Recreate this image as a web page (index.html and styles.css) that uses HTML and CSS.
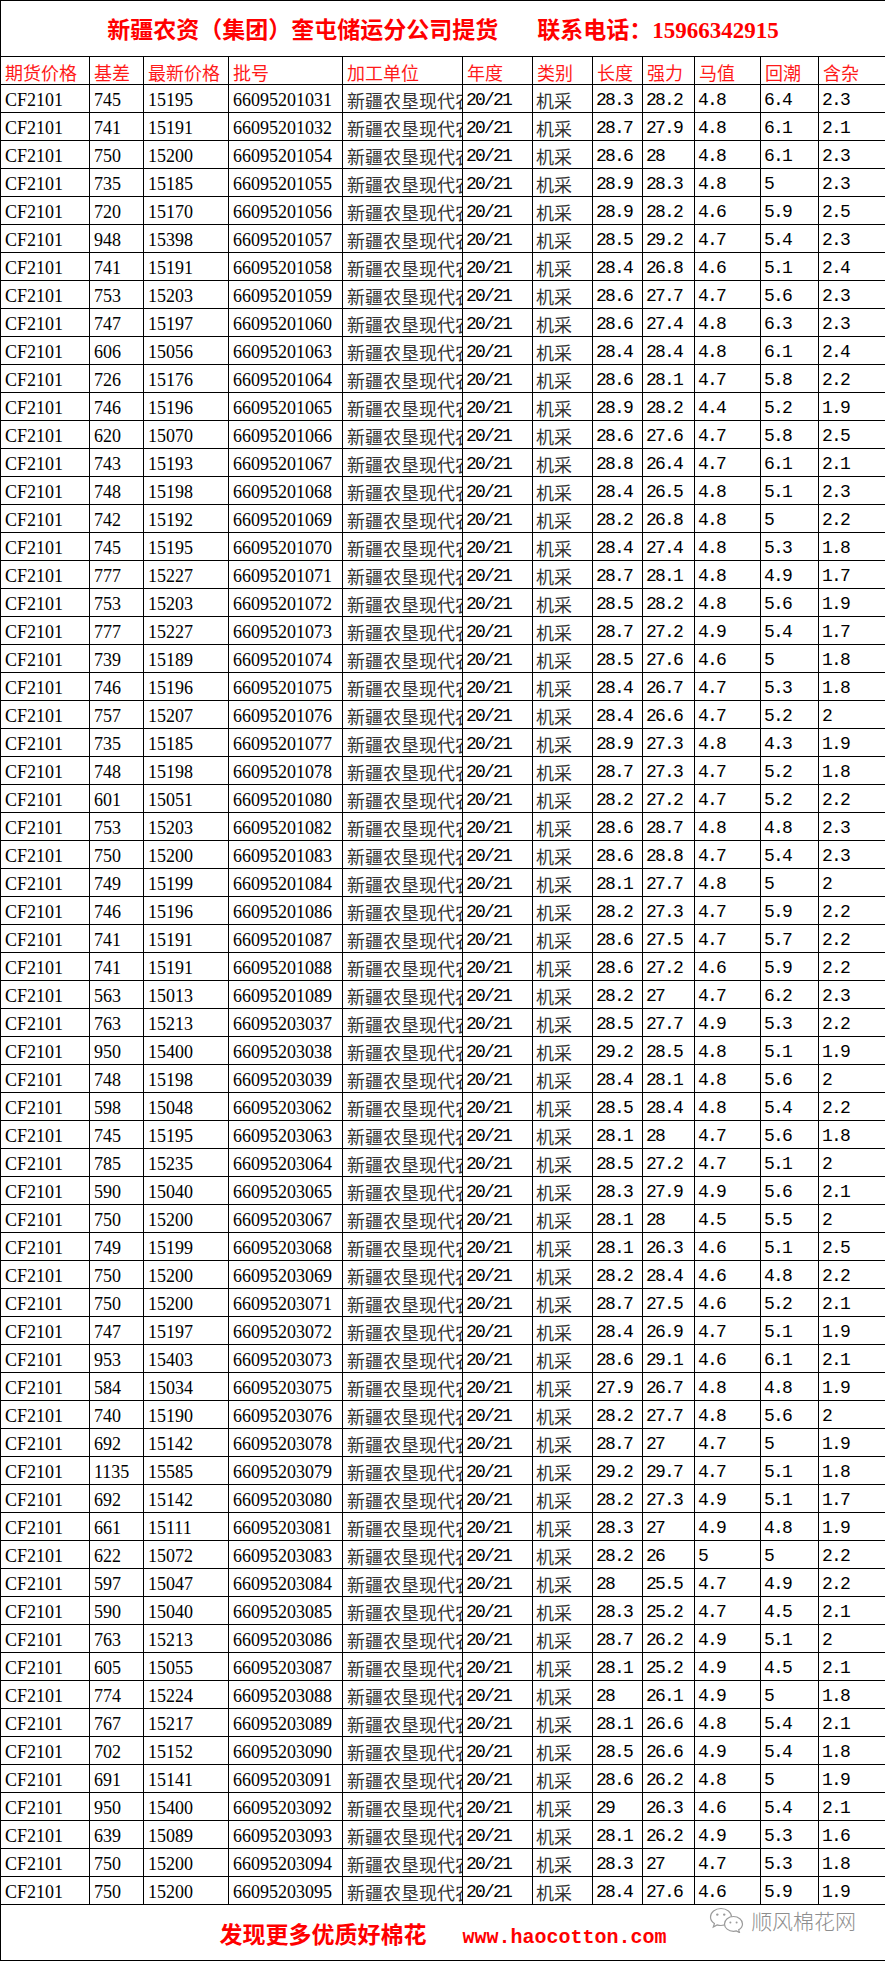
FILE: index.html
```html
<!DOCTYPE html>
<html lang="zh-CN">
<head>
<meta charset="utf-8">
<title>奎屯储运分公司提货</title>
<link rel="stylesheet" href="styles.css">
</head>
<body>
<div class="sheet">
<table class="grid">
<colgroup>
<col class="w-a"><col class="w-b"><col class="w-c"><col class="w-d"><col class="w-e"><col class="w-f"><col class="w-g"><col class="w-h"><col class="w-i"><col class="w-j"><col class="w-k"><col class="w-l">
</colgroup>
<thead>
<tr class="title"><th colspan="12"><span>新疆农资（集团）奎屯储运分公司提货</span><span class="tel">联系电话：<span class="num">15966342915</span></span></th></tr>
<tr class="head"><th>期货价格</th><th>基差</th><th>最新价格</th><th>批号</th><th>加工单位</th><th>年度</th><th>类别</th><th>长度</th><th>强力</th><th>马值</th><th>回潮</th><th>含杂</th></tr>
</thead>
<tbody>
<tr><td>CF2101</td><td>745</td><td>15195</td><td>66095201031</td><td>新疆农垦现代农业有限公司</td><td>20/21</td><td>机采</td><td>28.3</td><td>28.2</td><td>4.8</td><td>6.4</td><td>2.3</td></tr>
<tr><td>CF2101</td><td>741</td><td>15191</td><td>66095201032</td><td>新疆农垦现代农业有限公司</td><td>20/21</td><td>机采</td><td>28.7</td><td>27.9</td><td>4.8</td><td>6.1</td><td>2.1</td></tr>
<tr><td>CF2101</td><td>750</td><td>15200</td><td>66095201054</td><td>新疆农垦现代农业有限公司</td><td>20/21</td><td>机采</td><td>28.6</td><td>28</td><td>4.8</td><td>6.1</td><td>2.3</td></tr>
<tr><td>CF2101</td><td>735</td><td>15185</td><td>66095201055</td><td>新疆农垦现代农业有限公司</td><td>20/21</td><td>机采</td><td>28.9</td><td>28.3</td><td>4.8</td><td>5</td><td>2.3</td></tr>
<tr><td>CF2101</td><td>720</td><td>15170</td><td>66095201056</td><td>新疆农垦现代农业有限公司</td><td>20/21</td><td>机采</td><td>28.9</td><td>28.2</td><td>4.6</td><td>5.9</td><td>2.5</td></tr>
<tr><td>CF2101</td><td>948</td><td>15398</td><td>66095201057</td><td>新疆农垦现代农业有限公司</td><td>20/21</td><td>机采</td><td>28.5</td><td>29.2</td><td>4.7</td><td>5.4</td><td>2.3</td></tr>
<tr><td>CF2101</td><td>741</td><td>15191</td><td>66095201058</td><td>新疆农垦现代农业有限公司</td><td>20/21</td><td>机采</td><td>28.4</td><td>26.8</td><td>4.6</td><td>5.1</td><td>2.4</td></tr>
<tr><td>CF2101</td><td>753</td><td>15203</td><td>66095201059</td><td>新疆农垦现代农业有限公司</td><td>20/21</td><td>机采</td><td>28.6</td><td>27.7</td><td>4.7</td><td>5.6</td><td>2.3</td></tr>
<tr><td>CF2101</td><td>747</td><td>15197</td><td>66095201060</td><td>新疆农垦现代农业有限公司</td><td>20/21</td><td>机采</td><td>28.6</td><td>27.4</td><td>4.8</td><td>6.3</td><td>2.3</td></tr>
<tr><td>CF2101</td><td>606</td><td>15056</td><td>66095201063</td><td>新疆农垦现代农业有限公司</td><td>20/21</td><td>机采</td><td>28.4</td><td>28.4</td><td>4.8</td><td>6.1</td><td>2.4</td></tr>
<tr><td>CF2101</td><td>726</td><td>15176</td><td>66095201064</td><td>新疆农垦现代农业有限公司</td><td>20/21</td><td>机采</td><td>28.6</td><td>28.1</td><td>4.7</td><td>5.8</td><td>2.2</td></tr>
<tr><td>CF2101</td><td>746</td><td>15196</td><td>66095201065</td><td>新疆农垦现代农业有限公司</td><td>20/21</td><td>机采</td><td>28.9</td><td>28.2</td><td>4.4</td><td>5.2</td><td>1.9</td></tr>
<tr><td>CF2101</td><td>620</td><td>15070</td><td>66095201066</td><td>新疆农垦现代农业有限公司</td><td>20/21</td><td>机采</td><td>28.6</td><td>27.6</td><td>4.7</td><td>5.8</td><td>2.5</td></tr>
<tr><td>CF2101</td><td>743</td><td>15193</td><td>66095201067</td><td>新疆农垦现代农业有限公司</td><td>20/21</td><td>机采</td><td>28.8</td><td>26.4</td><td>4.7</td><td>6.1</td><td>2.1</td></tr>
<tr><td>CF2101</td><td>748</td><td>15198</td><td>66095201068</td><td>新疆农垦现代农业有限公司</td><td>20/21</td><td>机采</td><td>28.4</td><td>26.5</td><td>4.8</td><td>5.1</td><td>2.3</td></tr>
<tr><td>CF2101</td><td>742</td><td>15192</td><td>66095201069</td><td>新疆农垦现代农业有限公司</td><td>20/21</td><td>机采</td><td>28.2</td><td>26.8</td><td>4.8</td><td>5</td><td>2.2</td></tr>
<tr><td>CF2101</td><td>745</td><td>15195</td><td>66095201070</td><td>新疆农垦现代农业有限公司</td><td>20/21</td><td>机采</td><td>28.4</td><td>27.4</td><td>4.8</td><td>5.3</td><td>1.8</td></tr>
<tr><td>CF2101</td><td>777</td><td>15227</td><td>66095201071</td><td>新疆农垦现代农业有限公司</td><td>20/21</td><td>机采</td><td>28.7</td><td>28.1</td><td>4.8</td><td>4.9</td><td>1.7</td></tr>
<tr><td>CF2101</td><td>753</td><td>15203</td><td>66095201072</td><td>新疆农垦现代农业有限公司</td><td>20/21</td><td>机采</td><td>28.5</td><td>28.2</td><td>4.8</td><td>5.6</td><td>1.9</td></tr>
<tr><td>CF2101</td><td>777</td><td>15227</td><td>66095201073</td><td>新疆农垦现代农业有限公司</td><td>20/21</td><td>机采</td><td>28.7</td><td>27.2</td><td>4.9</td><td>5.4</td><td>1.7</td></tr>
<tr><td>CF2101</td><td>739</td><td>15189</td><td>66095201074</td><td>新疆农垦现代农业有限公司</td><td>20/21</td><td>机采</td><td>28.5</td><td>27.6</td><td>4.6</td><td>5</td><td>1.8</td></tr>
<tr><td>CF2101</td><td>746</td><td>15196</td><td>66095201075</td><td>新疆农垦现代农业有限公司</td><td>20/21</td><td>机采</td><td>28.4</td><td>26.7</td><td>4.7</td><td>5.3</td><td>1.8</td></tr>
<tr><td>CF2101</td><td>757</td><td>15207</td><td>66095201076</td><td>新疆农垦现代农业有限公司</td><td>20/21</td><td>机采</td><td>28.4</td><td>26.6</td><td>4.7</td><td>5.2</td><td>2</td></tr>
<tr><td>CF2101</td><td>735</td><td>15185</td><td>66095201077</td><td>新疆农垦现代农业有限公司</td><td>20/21</td><td>机采</td><td>28.9</td><td>27.3</td><td>4.8</td><td>4.3</td><td>1.9</td></tr>
<tr><td>CF2101</td><td>748</td><td>15198</td><td>66095201078</td><td>新疆农垦现代农业有限公司</td><td>20/21</td><td>机采</td><td>28.7</td><td>27.3</td><td>4.7</td><td>5.2</td><td>1.8</td></tr>
<tr><td>CF2101</td><td>601</td><td>15051</td><td>66095201080</td><td>新疆农垦现代农业有限公司</td><td>20/21</td><td>机采</td><td>28.2</td><td>27.2</td><td>4.7</td><td>5.2</td><td>2.2</td></tr>
<tr><td>CF2101</td><td>753</td><td>15203</td><td>66095201082</td><td>新疆农垦现代农业有限公司</td><td>20/21</td><td>机采</td><td>28.6</td><td>28.7</td><td>4.8</td><td>4.8</td><td>2.3</td></tr>
<tr><td>CF2101</td><td>750</td><td>15200</td><td>66095201083</td><td>新疆农垦现代农业有限公司</td><td>20/21</td><td>机采</td><td>28.6</td><td>28.8</td><td>4.7</td><td>5.4</td><td>2.3</td></tr>
<tr><td>CF2101</td><td>749</td><td>15199</td><td>66095201084</td><td>新疆农垦现代农业有限公司</td><td>20/21</td><td>机采</td><td>28.1</td><td>27.7</td><td>4.8</td><td>5</td><td>2</td></tr>
<tr><td>CF2101</td><td>746</td><td>15196</td><td>66095201086</td><td>新疆农垦现代农业有限公司</td><td>20/21</td><td>机采</td><td>28.2</td><td>27.3</td><td>4.7</td><td>5.9</td><td>2.2</td></tr>
<tr><td>CF2101</td><td>741</td><td>15191</td><td>66095201087</td><td>新疆农垦现代农业有限公司</td><td>20/21</td><td>机采</td><td>28.6</td><td>27.5</td><td>4.7</td><td>5.7</td><td>2.2</td></tr>
<tr><td>CF2101</td><td>741</td><td>15191</td><td>66095201088</td><td>新疆农垦现代农业有限公司</td><td>20/21</td><td>机采</td><td>28.6</td><td>27.2</td><td>4.6</td><td>5.9</td><td>2.2</td></tr>
<tr><td>CF2101</td><td>563</td><td>15013</td><td>66095201089</td><td>新疆农垦现代农业有限公司</td><td>20/21</td><td>机采</td><td>28.2</td><td>27</td><td>4.7</td><td>6.2</td><td>2.3</td></tr>
<tr><td>CF2101</td><td>763</td><td>15213</td><td>66095203037</td><td>新疆农垦现代农业有限公司</td><td>20/21</td><td>机采</td><td>28.5</td><td>27.7</td><td>4.9</td><td>5.3</td><td>2.2</td></tr>
<tr><td>CF2101</td><td>950</td><td>15400</td><td>66095203038</td><td>新疆农垦现代农业有限公司</td><td>20/21</td><td>机采</td><td>29.2</td><td>28.5</td><td>4.8</td><td>5.1</td><td>1.9</td></tr>
<tr><td>CF2101</td><td>748</td><td>15198</td><td>66095203039</td><td>新疆农垦现代农业有限公司</td><td>20/21</td><td>机采</td><td>28.4</td><td>28.1</td><td>4.8</td><td>5.6</td><td>2</td></tr>
<tr><td>CF2101</td><td>598</td><td>15048</td><td>66095203062</td><td>新疆农垦现代农业有限公司</td><td>20/21</td><td>机采</td><td>28.5</td><td>28.4</td><td>4.8</td><td>5.4</td><td>2.2</td></tr>
<tr><td>CF2101</td><td>745</td><td>15195</td><td>66095203063</td><td>新疆农垦现代农业有限公司</td><td>20/21</td><td>机采</td><td>28.1</td><td>28</td><td>4.7</td><td>5.6</td><td>1.8</td></tr>
<tr><td>CF2101</td><td>785</td><td>15235</td><td>66095203064</td><td>新疆农垦现代农业有限公司</td><td>20/21</td><td>机采</td><td>28.5</td><td>27.2</td><td>4.7</td><td>5.1</td><td>2</td></tr>
<tr><td>CF2101</td><td>590</td><td>15040</td><td>66095203065</td><td>新疆农垦现代农业有限公司</td><td>20/21</td><td>机采</td><td>28.3</td><td>27.9</td><td>4.9</td><td>5.6</td><td>2.1</td></tr>
<tr><td>CF2101</td><td>750</td><td>15200</td><td>66095203067</td><td>新疆农垦现代农业有限公司</td><td>20/21</td><td>机采</td><td>28.1</td><td>28</td><td>4.5</td><td>5.5</td><td>2</td></tr>
<tr><td>CF2101</td><td>749</td><td>15199</td><td>66095203068</td><td>新疆农垦现代农业有限公司</td><td>20/21</td><td>机采</td><td>28.1</td><td>26.3</td><td>4.6</td><td>5.1</td><td>2.5</td></tr>
<tr><td>CF2101</td><td>750</td><td>15200</td><td>66095203069</td><td>新疆农垦现代农业有限公司</td><td>20/21</td><td>机采</td><td>28.2</td><td>28.4</td><td>4.6</td><td>4.8</td><td>2.2</td></tr>
<tr><td>CF2101</td><td>750</td><td>15200</td><td>66095203071</td><td>新疆农垦现代农业有限公司</td><td>20/21</td><td>机采</td><td>28.7</td><td>27.5</td><td>4.6</td><td>5.2</td><td>2.1</td></tr>
<tr><td>CF2101</td><td>747</td><td>15197</td><td>66095203072</td><td>新疆农垦现代农业有限公司</td><td>20/21</td><td>机采</td><td>28.4</td><td>26.9</td><td>4.7</td><td>5.1</td><td>1.9</td></tr>
<tr><td>CF2101</td><td>953</td><td>15403</td><td>66095203073</td><td>新疆农垦现代农业有限公司</td><td>20/21</td><td>机采</td><td>28.6</td><td>29.1</td><td>4.6</td><td>6.1</td><td>2.1</td></tr>
<tr><td>CF2101</td><td>584</td><td>15034</td><td>66095203075</td><td>新疆农垦现代农业有限公司</td><td>20/21</td><td>机采</td><td>27.9</td><td>26.7</td><td>4.8</td><td>4.8</td><td>1.9</td></tr>
<tr><td>CF2101</td><td>740</td><td>15190</td><td>66095203076</td><td>新疆农垦现代农业有限公司</td><td>20/21</td><td>机采</td><td>28.2</td><td>27.7</td><td>4.8</td><td>5.6</td><td>2</td></tr>
<tr><td>CF2101</td><td>692</td><td>15142</td><td>66095203078</td><td>新疆农垦现代农业有限公司</td><td>20/21</td><td>机采</td><td>28.7</td><td>27</td><td>4.7</td><td>5</td><td>1.9</td></tr>
<tr><td>CF2101</td><td>1135</td><td>15585</td><td>66095203079</td><td>新疆农垦现代农业有限公司</td><td>20/21</td><td>机采</td><td>29.2</td><td>29.7</td><td>4.7</td><td>5.1</td><td>1.8</td></tr>
<tr><td>CF2101</td><td>692</td><td>15142</td><td>66095203080</td><td>新疆农垦现代农业有限公司</td><td>20/21</td><td>机采</td><td>28.2</td><td>27.3</td><td>4.9</td><td>5.1</td><td>1.7</td></tr>
<tr><td>CF2101</td><td>661</td><td>15111</td><td>66095203081</td><td>新疆农垦现代农业有限公司</td><td>20/21</td><td>机采</td><td>28.3</td><td>27</td><td>4.9</td><td>4.8</td><td>1.9</td></tr>
<tr><td>CF2101</td><td>622</td><td>15072</td><td>66095203083</td><td>新疆农垦现代农业有限公司</td><td>20/21</td><td>机采</td><td>28.2</td><td>26</td><td>5</td><td>5</td><td>2.2</td></tr>
<tr><td>CF2101</td><td>597</td><td>15047</td><td>66095203084</td><td>新疆农垦现代农业有限公司</td><td>20/21</td><td>机采</td><td>28</td><td>25.5</td><td>4.7</td><td>4.9</td><td>2.2</td></tr>
<tr><td>CF2101</td><td>590</td><td>15040</td><td>66095203085</td><td>新疆农垦现代农业有限公司</td><td>20/21</td><td>机采</td><td>28.3</td><td>25.2</td><td>4.7</td><td>4.5</td><td>2.1</td></tr>
<tr><td>CF2101</td><td>763</td><td>15213</td><td>66095203086</td><td>新疆农垦现代农业有限公司</td><td>20/21</td><td>机采</td><td>28.7</td><td>26.2</td><td>4.9</td><td>5.1</td><td>2</td></tr>
<tr><td>CF2101</td><td>605</td><td>15055</td><td>66095203087</td><td>新疆农垦现代农业有限公司</td><td>20/21</td><td>机采</td><td>28.1</td><td>25.2</td><td>4.9</td><td>4.5</td><td>2.1</td></tr>
<tr><td>CF2101</td><td>774</td><td>15224</td><td>66095203088</td><td>新疆农垦现代农业有限公司</td><td>20/21</td><td>机采</td><td>28</td><td>26.1</td><td>4.9</td><td>5</td><td>1.8</td></tr>
<tr><td>CF2101</td><td>767</td><td>15217</td><td>66095203089</td><td>新疆农垦现代农业有限公司</td><td>20/21</td><td>机采</td><td>28.1</td><td>26.6</td><td>4.8</td><td>5.4</td><td>2.1</td></tr>
<tr><td>CF2101</td><td>702</td><td>15152</td><td>66095203090</td><td>新疆农垦现代农业有限公司</td><td>20/21</td><td>机采</td><td>28.5</td><td>26.6</td><td>4.9</td><td>5.4</td><td>1.8</td></tr>
<tr><td>CF2101</td><td>691</td><td>15141</td><td>66095203091</td><td>新疆农垦现代农业有限公司</td><td>20/21</td><td>机采</td><td>28.6</td><td>26.2</td><td>4.8</td><td>5</td><td>1.9</td></tr>
<tr><td>CF2101</td><td>950</td><td>15400</td><td>66095203092</td><td>新疆农垦现代农业有限公司</td><td>20/21</td><td>机采</td><td>29</td><td>26.3</td><td>4.6</td><td>5.4</td><td>2.1</td></tr>
<tr><td>CF2101</td><td>639</td><td>15089</td><td>66095203093</td><td>新疆农垦现代农业有限公司</td><td>20/21</td><td>机采</td><td>28.1</td><td>26.2</td><td>4.9</td><td>5.3</td><td>1.6</td></tr>
<tr><td>CF2101</td><td>750</td><td>15200</td><td>66095203094</td><td>新疆农垦现代农业有限公司</td><td>20/21</td><td>机采</td><td>28.3</td><td>27</td><td>4.7</td><td>5.3</td><td>1.8</td></tr>
<tr><td>CF2101</td><td>750</td><td>15200</td><td>66095203095</td><td>新疆农垦现代农业有限公司</td><td>20/21</td><td>机采</td><td>28.4</td><td>27.6</td><td>4.6</td><td>5.9</td><td>1.9</td></tr>
</tbody>
<tfoot>
<tr class="foot"><td colspan="12"><span class="slogan">发现更多优质好棉花</span><span class="url">www.haocotton.com</span><div class="wm"><svg class="wechat" viewBox="0 0 36 26" width="36" height="26" aria-hidden="true"><path d="M13 1.5C7.2 1.5 2.5 5.3 2.5 10c0 2.7 1.5 5 3.9 6.6L5.3 20l3.8-2.1c1.2.4 2.5.6 3.9.6 5.8 0 10.5-3.8 10.5-8.5S18.8 1.5 13 1.5z" fill="#fff" stroke="#9b9b9b" stroke-width="1.2"/><circle cx="9.3" cy="7.6" r="1.2" fill="#9b9b9b"/><circle cx="16.2" cy="7.6" r="1.2" fill="#9b9b9b"/><path d="M25.5 9.5c-5 0-9 3.3-9 7.4s4 7.4 9 7.4c1 0 2-.1 2.9-.4l3.1 1.7-.8-2.8c2.3-1.4 3.8-3.5 3.8-5.9 0-4.1-4-7.4-9-7.4z" fill="#fff" stroke="#9b9b9b" stroke-width="1.2"/><circle cx="22.4" cy="15.6" r="1" fill="#9b9b9b"/><circle cx="28.6" cy="15.6" r="1" fill="#9b9b9b"/></svg><span class="wm-text">顺风棉花网</span></div></td></tr>
</tfoot>
</table>
</div>
</body>
</html>
```
FILE: styles.css
```css
html, body {
  margin: 0;
  padding: 0;
  background: #fff;
}

.sheet {
  width: 885px;
}

.grid {
  width: 885px;
  border-collapse: collapse;
  table-layout: fixed;
  font-family: "Liberation Serif", "Noto Sans CJK SC", serif;
  font-size: 18px;
  color: #000;
}

.w-a { width: 89px; }
.w-b { width: 54px; }
.w-c { width: 85px; }
.w-d { width: 114px; }
.w-e { width: 120px; }
.w-f { width: 70px; }
.w-g { width: 60px; }
.w-h { width: 50px; }
.w-i { width: 52px; }
.w-j { width: 66px; }
.w-k { width: 58px; }
.w-l { width: 67px; }

.grid th,
.grid td {
  border: 1px solid #000;
  padding: 0 0 2px 4px;
  text-align: left;
  vertical-align: bottom;
  line-height: 20px;
  white-space: nowrap;
  overflow: hidden;
  font-weight: 400;
}

.grid tbody tr,
.grid .head {
  height: 28px;
}

.grid tbody td:nth-child(5),
.grid tbody td:nth-child(7) {
  font-family: "Noto Sans CJK SC", sans-serif;
  color: #333;
  font-size: 18px;
}

.grid tbody td:nth-child(6),
.grid tbody td:nth-child(n+8) {
  font-family: "Liberation Mono", monospace;
  letter-spacing: -1.8px;
  padding-left: 3px;
}

.grid tbody td:nth-child(7) {
  padding-left: 3px;
}

.grid .head th {
  font-family: "Noto Sans CJK SC", sans-serif;
  color: #ff1a1a;
  font-size: 18px;
}

.grid .title {
  height: 56px;
}

.grid .title th {
  text-align: center;
  vertical-align: middle;
  padding: 4px 0 0;
  color: #ff0000;
  font-family: "Liberation Serif", "Noto Sans CJK SC", serif;
  font-size: 23px;
  font-weight: 700;
  line-height: 28px;
}

.tel {
  margin-left: 39px;
}

.foot {
  height: 56px;
}

.foot td {
  position: relative;
  text-align: center;
  vertical-align: middle;
  padding: 6px 0 0;
  line-height: 28px;
  overflow: visible;
}

.slogan {
  color: #ff0000;
  font-family: "Noto Sans CJK SC", sans-serif;
  font-size: 23px;
  font-weight: 700;
}

.url {
  margin-left: 36px;
  color: #ff0000;
  font-family: "Liberation Mono", monospace;
  font-size: 20px;
  font-weight: 700;
}

.wm {
  position: absolute;
  top: 2px;
  right: 29px;
  display: flex;
  align-items: center;
  gap: 7px;
  line-height: 26px;
}

.wechat {
  display: block;
}

.wm-text {
  font-family: "Noto Sans CJK SC", sans-serif;
  font-size: 21px;
  font-weight: 300;
  color: #8e8e8e;
}
```
